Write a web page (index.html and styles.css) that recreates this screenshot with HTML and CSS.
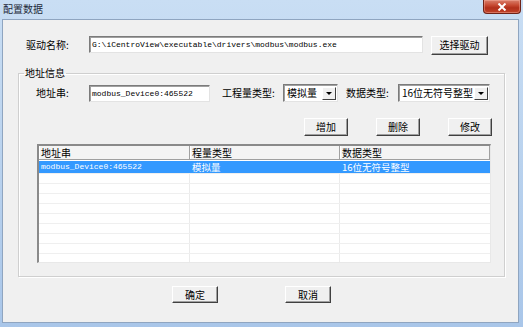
FILE: index.html
```html
<!DOCTYPE html>
<html lang="zh-CN">
<head>
  <meta charset="UTF-8" />
  <title>配置数据</title>
  <link rel="stylesheet" href="styles.css">
</head>
<body>
  <div class="window">
    <!-- title bar -->
    <div class="titlebar">
      <span class="title">配置数据</span>
      <div class="close-btn">
        <svg width="10" height="8" viewBox="0 0 10 8"><path d="M1.5 0.5 L8.5 7.5 M8.5 0.5 L1.5 7.5" stroke="#fff" stroke-width="2"/></svg>
      </div>
    </div>

    <div class="client">
      <!-- driver row -->
      <div class="row driver-row">
        <label class="lbl lbl-driver">驱动名称:</label>
        <div class="input input-driver">G:\iCentroView\executable\drivers\modbus\modbus.exe</div>
        <button class="btn btn-pick">选择驱动</button>
      </div>

      <!-- address group -->
      <fieldset class="group">
        <legend>地址信息</legend>

        <div class="row addr-row">
          <label class="lbl lbl-addr">地址串:</label>
          <div class="input input-addr">modbus_Device0:465522</div>
          <label class="lbl lbl-kind">工程量类型:</label>
          <div class="select select-kind"><span>模拟量</span><i class="arrow"></i></div>
          <label class="lbl lbl-type">数据类型:</label>
          <div class="select select-type"><span>16位无符号整型</span><i class="arrow"></i></div>
        </div>

        <div class="row action-row">
          <button class="btn btn-small">增加</button>
          <button class="btn btn-small">删除</button>
          <button class="btn btn-small">修改</button>
        </div>

        <div class="grid">
          <div class="grid-head">
            <div class="cell c1">地址串</div>
            <div class="cell c2">程量类型</div>
            <div class="cell c3">数据类型</div>
          </div>
          <div class="grid-body">
            <div class="grid-row selected">
              <div class="cell c1 mono">modbus_Device0:465522</div>
              <div class="cell c2">模拟量</div>
              <div class="cell c3">16位无符号整型</div>
            </div>
            <div class="grid-row"><div class="cell c1"></div><div class="cell c2"></div><div class="cell c3"></div></div>
            <div class="grid-row"><div class="cell c1"></div><div class="cell c2"></div><div class="cell c3"></div></div>
            <div class="grid-row"><div class="cell c1"></div><div class="cell c2"></div><div class="cell c3"></div></div>
            <div class="grid-row"><div class="cell c1"></div><div class="cell c2"></div><div class="cell c3"></div></div>
            <div class="grid-row"><div class="cell c1"></div><div class="cell c2"></div><div class="cell c3"></div></div>
            <div class="grid-row"><div class="cell c1"></div><div class="cell c2"></div><div class="cell c3"></div></div>
            <div class="grid-row"><div class="cell c1"></div><div class="cell c2"></div><div class="cell c3"></div></div>
            <div class="grid-row"><div class="cell c1"></div><div class="cell c2"></div><div class="cell c3"></div></div>
            <div class="grid-row"><div class="cell c1"></div><div class="cell c2"></div><div class="cell c3"></div></div>
          </div>
        </div>
      </fieldset>

      <!-- dialog buttons -->
      <div class="row footer-row">
        <button class="btn btn-foot">确定</button>
        <button class="btn btn-foot">取消</button>
      </div>
    </div>
  </div>
</body>
</html>
```

FILE: styles.css
```css
* { box-sizing: border-box; }

body {
  margin: 0;
  width: 523px;
  height: 327px;
  overflow: hidden;
  background: #b8d0ec;
  font-family: "Noto Sans CJK SC", "Liberation Sans", sans-serif;
  font-size: 10px;
  color: #000;
}

.window {
  width: 523px; height: 327px;
  display: flex; flex-direction: column;
  background: linear-gradient(180deg, #c9def4 0%, #b9d2ee 50%, #a9c6e9 100%);
}

/* title bar */
.titlebar {
  height: 19px;
  display: flex; align-items: flex-start; justify-content: space-between;
}
.title {
  margin: 3px 0 0 3px;
  font-size: 10px; line-height: 12px;
  color: #1e2a3a;
}
.close-btn {
  flex: none;
  width: 38px; height: 14px;
  margin-right: 2px;
  border: 1px solid #6e2318; border-top: none;
  border-radius: 0 0 4px 4px;
  background: linear-gradient(180deg, #d9806c 0%, #c74a33 40%, #b2301b 60%, #c0432a 100%);
  box-shadow: inset 0 0 0 1px rgba(255,190,175,0.4);
  display: flex; align-items: center; justify-content: center;
}

/* client area */
.client {
  flex: 1;
  margin: 0 4px 4px 2px;
  background: #f0f0f0;
  border: 1px solid #8fa5c0;
  padding: 15px 13px 0 15px;
}

.row { display: flex; align-items: center; }

.lbl { display: block; line-height: 14px; white-space: nowrap; }

.input {
  height: 17px;
  background: #fff;
  border: 1px solid;
  border-color: #7b7b7b #e3e3e3 #e3e3e3 #7b7b7b;
  box-shadow: inset 1px 1px 0 #a0a0a0;
  padding: 0 2px;
  font-family: "Liberation Mono", monospace;
  font-size: 8px; line-height: 15px;
  white-space: nowrap; overflow: hidden;
}

.btn {
  height: 18px;
  padding: 0;
  background: #f0f0f0;
  border: 1px solid;
  border-color: #fff #404040 #404040 #fff;
  box-shadow: inset -1px -1px 0 #a0a0a0;
  font-family: inherit; font-size: 10px; line-height: 14px;
  color: #000;
}

/* driver row */
.driver-row { padding-left: 8px; height: 19px; }
.lbl-driver { width: 63px; }
.input-driver { width: 334px; }
.btn-pick { width: 57px; height: 19px; margin-left: 8px; margin-top: 1px; }

/* group box */
.group {
  margin: 12px 0 0;
  width: 487px;
  padding: 0 12px 13px 5px;
  border: 1px solid #cfcfcf;
  box-shadow: inset 1px 1px 0 #fff, 1px 1px 0 #fff;
}
.group legend {
  padding: 0 1px;
  font-size: 10px; line-height: 14px;
}

.addr-row { margin-top: 4px; height: 18px; padding-left: 12px; }
.lbl-addr { width: 53px; }
.input-addr { width: 121px; }
.lbl-kind { margin-left: 12px; width: 61px; }
.lbl-type { margin-left: 8px; width: 52px; }

.select {
  height: 18px;
  display: flex; align-items: center; justify-content: space-between;
  background: #fff;
  border: 1px solid;
  border-color: #7b7b7b #e3e3e3 #e3e3e3 #7b7b7b;
  box-shadow: inset 1px 1px 0 #a0a0a0;
  padding: 0 1px 0 3px;
  line-height: 14px;
}
.select-kind { width: 55px; }
.select-type { width: 92px; }
.arrow {
  width: 14px; height: 13px;
  background: #f0f0f0;
  border: 1px solid;
  border-color: #fff #404040 #404040 #fff;
  position: relative;
}
.arrow::after {
  content: "";
  position: absolute; left: 3px; top: 4px;
  border-left: 3px solid transparent;
  border-right: 3px solid transparent;
  border-top: 3px solid #000;
}

.action-row { justify-content: flex-end; gap: 28px; margin-top: 16px; }
.btn-small { width: 44px; }

/* list view */
.grid {
  margin: 8px 1px 0 13px;
  height: 119px;
  background: #fff;
  border-style: solid;
  border-width: 2px 1px 1px 2px;
  border-color: #8a8a8a #e8e8e8 #e8e8e8 #8a8a8a;
  overflow: hidden;
}
.grid-head { display: flex; height: 14px; background: #f4f4f4; border-bottom: 1px solid #a0a0a0; }
.grid-head .cell {
  border-right: 1px solid #a0a0a0;
  box-shadow: inset 1px 0 0 #fff;
  line-height: 13px;
  padding-left: 2px;
}
.cell { white-space: nowrap; overflow: hidden; }
.c1 { width: 151px; }
.c2 { width: 150px; }
.c3 { width: 150px; }

.grid-body { padding-top: 1px; }
.grid-row { display: flex; height: 10px; border-bottom: 1px solid #efefef; }
.grid-row .cell { border-right: 1px solid #ebebeb; }
.grid-row .c3 { border-right-color: transparent; }

.grid-row.selected {
  height: 13px;
  background: #3399ff; color: #fff;
  border-bottom-color: #efefef;
}
.grid-row.selected .cell {
  border-right-color: transparent;
  overflow: visible;
  font-size: 9.5px; line-height: 12px;
  padding-left: 2px;
}
.grid-row.selected .mono { font-size: 8px; }
.mono { font-family: "Liberation Mono", monospace; font-size: 8px; }

/* footer */
.footer-row { margin: 9px 0 0 154px; gap: 67px; }
.btn-foot { width: 46px; height: 17px; }
```
